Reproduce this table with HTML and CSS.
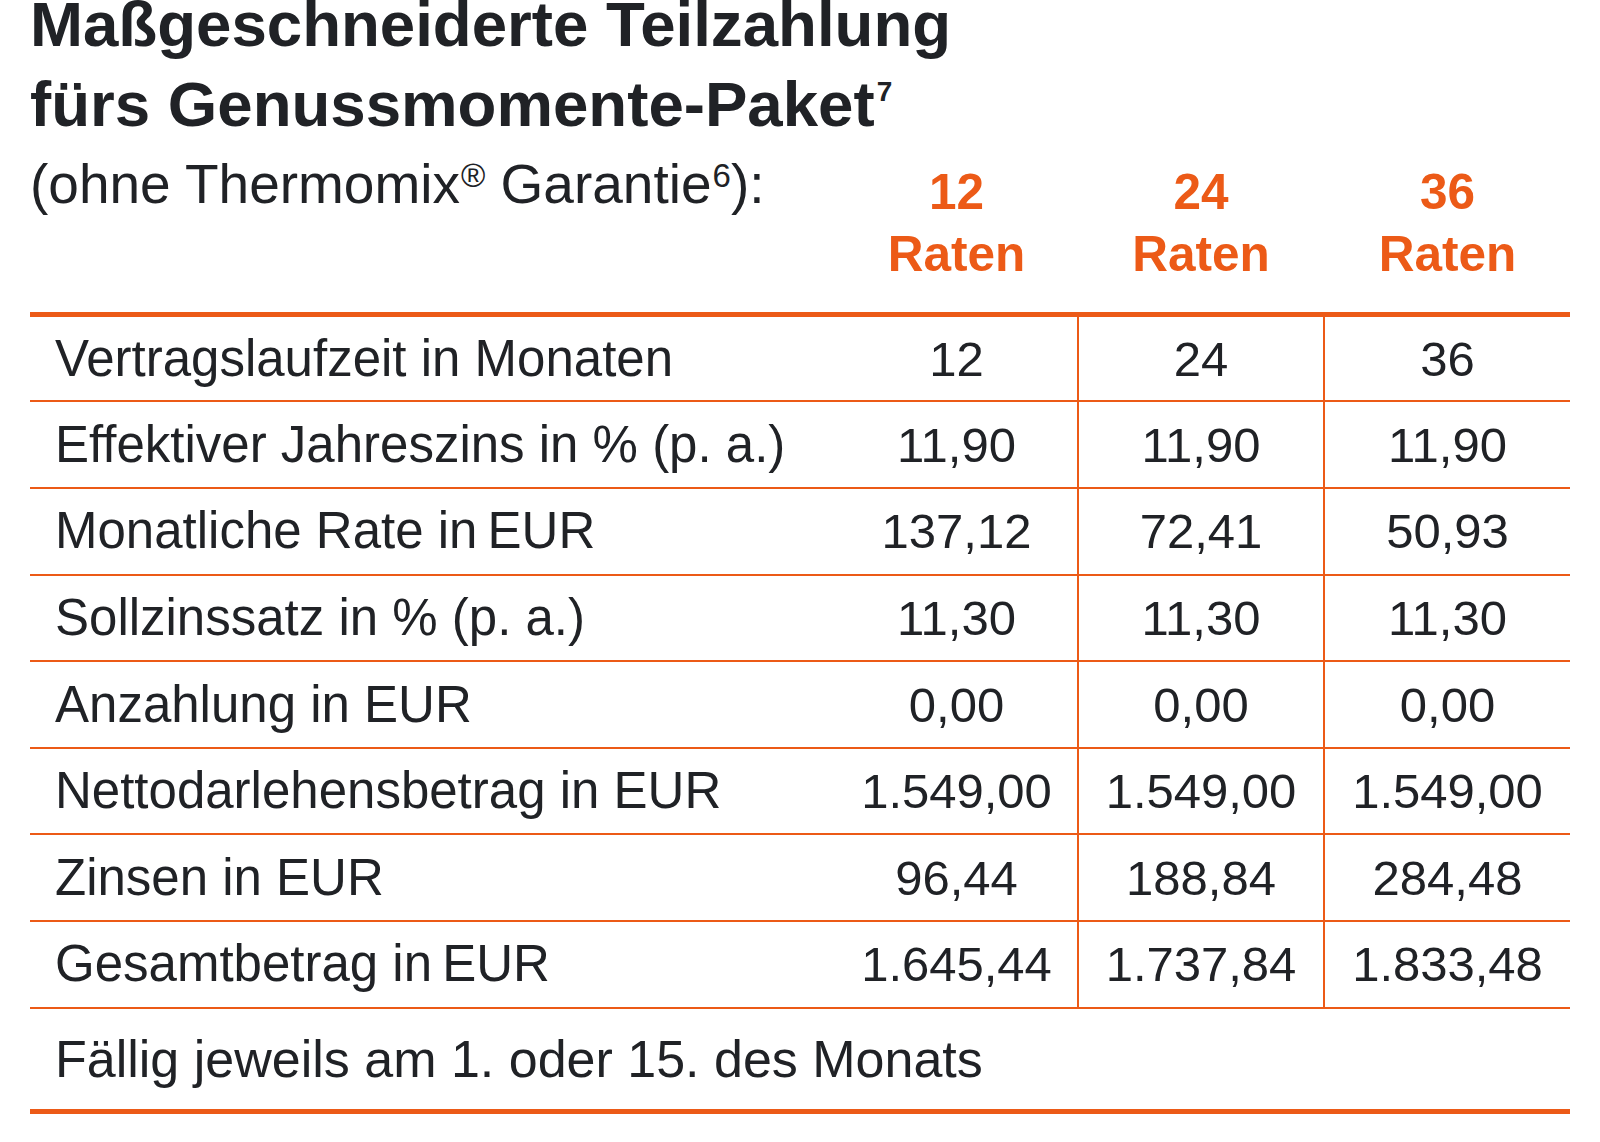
FILE: index.html
```html
<!DOCTYPE html>
<html lang="de">
<head>
<meta charset="utf-8">
<title>Maßgeschneiderte Teilzahlung</title>
<link rel="stylesheet" href="styles.css">
</head>
<body>
<div class="sheet">
  <h1 class="title">Maßgeschneiderte Teilzahlung<br>fürs Genussmomente-Paket<sup class="title-sup">7</sup></h1>

  <div class="grid head">
    <div class="subtitle">(ohne Thermomix<sup class="sub-sup">®</sup> Garantie<sup class="sub-sup">6</sup>):</div>
    <div class="rate">12<br>Raten</div>
    <div class="rate">24<br>Raten</div>
    <div class="rate">36<br>Raten</div>
  </div>

  <div class="table">
    <div class="grid row">
      <div class="label">Vertragslaufzeit in Monaten</div>
      <div class="val">12</div><div class="val div">24</div><div class="val div">36</div>
    </div>
    <div class="grid row">
      <div class="label">Effektiver Jahreszins in % (p. a.)</div>
      <div class="val">11,90</div><div class="val div">11,90</div><div class="val div">11,90</div>
    </div>
    <div class="grid row">
      <div class="label">Monatliche Rate in&#8201;EUR</div>
      <div class="val">137,12</div><div class="val div">72,41</div><div class="val div">50,93</div>
    </div>
    <div class="grid row">
      <div class="label">Sollzinssatz in % (p. a.)</div>
      <div class="val">11,30</div><div class="val div">11,30</div><div class="val div">11,30</div>
    </div>
    <div class="grid row">
      <div class="label">Anzahlung in EUR</div>
      <div class="val">0,00</div><div class="val div">0,00</div><div class="val div">0,00</div>
    </div>
    <div class="grid row">
      <div class="label">Nettodarlehensbetrag in EUR</div>
      <div class="val">1.549,00</div><div class="val div">1.549,00</div><div class="val div">1.549,00</div>
    </div>
    <div class="grid row">
      <div class="label">Zinsen in EUR</div>
      <div class="val">96,44</div><div class="val div">188,84</div><div class="val div">284,48</div>
    </div>
    <div class="grid row">
      <div class="label">Gesamtbetrag in&#8201;EUR</div>
      <div class="val">1.645,44</div><div class="val div">1.737,84</div><div class="val div">1.833,48</div>
    </div>
    <div class="foot">Fällig jeweils am 1. oder 15. des Monats</div>
  </div>
</div>
</body>
</html>
```
FILE: styles.css
```css
* { box-sizing: border-box; }

html, body {
  margin: 0;
  padding: 0;
  background: #ffffff;
}

body {
  font-family: "Liberation Sans", Arial, Helvetica, sans-serif;
  color: #202226;
  overflow: hidden;
}

.sheet {
  width: 1600px;
  height: 1142px;
  padding-left: 30px;
}

.title {
  margin: -16px 0 0 0;
  font-size: 63.6px;
  font-weight: 700;
  line-height: 80px;
  color: #202226;
}

.title-sup {
  font-size: 28px;
  font-weight: 700;
  line-height: 0;
  vertical-align: 25px;
  margin-left: 2px;
}

.grid {
  display: grid;
  grid-template-columns: 806px 241px 246px 247px;
  width: 1540px;
}

.head {
  align-items: start;
}

.subtitle {
  font-size: 55px;
  line-height: 64px;
  padding-top: 8.4px;
  white-space: nowrap;
}

.sub-sup {
  font-size: 33px;
  line-height: 0;
  vertical-align: 16px;
  margin-left: 1px;
}

.rate {
  font-size: 49.5px;
  font-weight: 700;
  line-height: 61.4px;
  color: #ec5a17;
  text-align: center;
  padding-top: 17.1px;
  padding-bottom: 28.3px;
}

.rate:nth-child(3),
.rate:nth-child(4) {
  padding-left: 2px;
}

.table {
  width: 1540px;
  border-top: 5px solid #ec5a17;
  border-bottom: 5px solid #ec5a17;
}

.row {
  height: 86.67px;
  border-bottom: 2px solid #ec5a17;
  line-height: 58px;
}

.row:first-child {
  height: 85px;
}

.label {
  display: flex;
  align-items: center;
  padding-left: 25px;
  font-size: 51px;
  white-space: nowrap;
}

.val {
  display: flex;
  align-items: center;
  justify-content: center;
  font-size: 49px;
  white-space: nowrap;
}

.val.div {
  border-left: 2px solid #ec5a17;
}

.foot {
  height: 100.6px;
  display: flex;
  align-items: center;
  padding-left: 25px;
  font-size: 52px;
  line-height: 58px;
}
```
